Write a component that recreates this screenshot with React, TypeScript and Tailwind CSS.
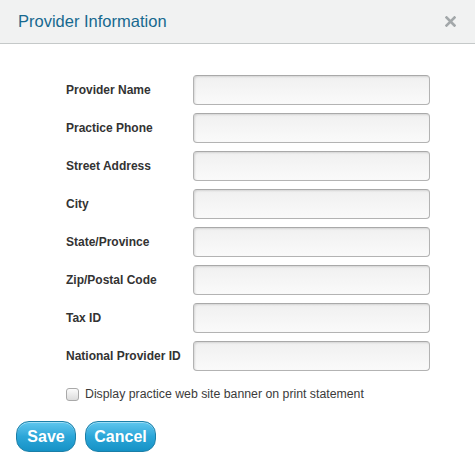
import React from "react";

const FIELDS = [
  "Provider Name",
  "Practice Phone",
  "Street Address",
  "City",
  "State/Province",
  "Zip/Postal Code",
  "Tax ID",
  "National Provider ID",
];

export default function App() {
  return (
    <div className="w-[475px] h-[468px] bg-white font-['Liberation_Sans',Arial,sans-serif]">
      <header className="h-[44px] bg-[#f1f2f2] border-b border-[#c5c9c9] flex items-center justify-between pl-[18px] pr-[19px]">
        <h1 className="text-[16.5px] text-[#17698f] leading-none">Provider Information</h1>
        <svg width="11" height="11" viewBox="0 0 11 11" aria-label="Close">
          <path d="M1.5 1.5 9.5 9.5M9.5 1.5 1.5 9.5" stroke="#a3a8aa" strokeWidth="2.6" strokeLinecap="square" />
        </svg>
      </header>

      <main className="pt-[31px] pl-[66px]">
        <div className="flex flex-col gap-[8px]">
          {FIELDS.map((label) => (
            <FieldRow key={label} label={label} />
          ))}
        </div>

        <label className="flex items-center gap-[6px] mt-[14px] text-[12.3px] text-[#3b3b3b]">
          <span className="w-[13px] h-[13px] rounded-[3px] border border-[#a9a9a9] bg-gradient-to-b from-[#fbfbfb] to-[#dcdcdc]" />
          Display practice web site banner on print statement
        </label>
      </main>

      <footer className="flex gap-[9px] pl-[16px] mt-[18px]">
        <BlueButton w="w-[60px]">Save</BlueButton>
        <BlueButton w="w-[71px]">Cancel</BlueButton>
      </footer>
    </div>
  );
}

function FieldRow({ label }: { label: string }) {
  return (
    <div className="flex items-center h-[30px]">
      <span className="w-[127px] text-[12px] font-bold text-[#333]">{label}</span>
      <div className="w-[237px] h-[30px] rounded-[4px] border border-[#b3b3b3] border-t-[#a9a9a9] bg-gradient-to-b from-[#f0f0f0] to-[#fafafa] shadow-[inset_1px_1px_2px_rgba(0,0,0,0.12)]" />
    </div>
  );
}

function BlueButton({ children, w }: { children: React.ReactNode; w: string }) {
  return (
    <button className={`${w} h-[31px] rounded-[13px] border border-[#1b7fa8] bg-gradient-to-b from-[#5ec7ef] via-[#2ba6d8] to-[#1592c6] text-white text-[16px] font-bold leading-none shadow-[inset_0_1px_0_rgba(255,255,255,0.4)]`}>
      {children}
    </button>
  );
}
